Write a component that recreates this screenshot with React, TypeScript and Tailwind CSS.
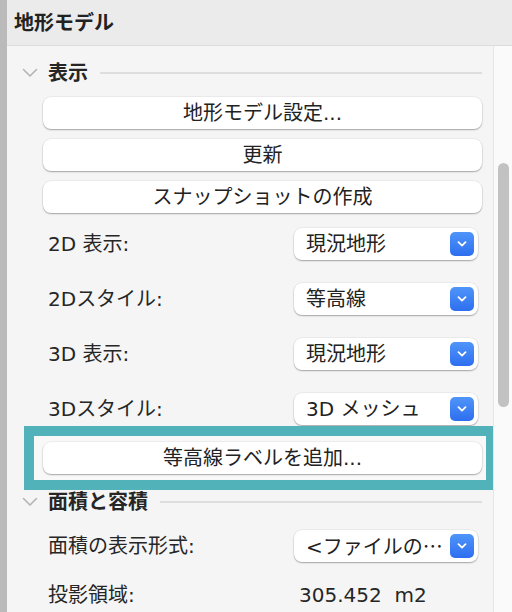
import React from "react";

const font = "font-['DejaVu_Sans','Noto_Sans_CJK_JP',sans-serif]";

function SectionChevron() {
  return (
    <svg width="16" height="10" viewBox="0 0 16 10" className="shrink-0">
      <polyline points="1.5,1.5 8,8 14.5,1.5" fill="none" stroke="#b4b4b4" strokeWidth="1.6" strokeLinecap="round" strokeLinejoin="round" />
    </svg>
  );
}

function SectionHeading({ title, className = "" }: { title: string; className?: string }) {
  return (
    <div className={`flex items-center pl-[15px] pr-[11px] ${className}`}>
      <SectionChevron />
      <span className="ml-[10px] text-[20px] font-bold text-[#262626] leading-[24px]">{title}</span>
      <div className="ml-[12px] flex-1 h-[2px] bg-[#dedede]" />
    </div>
  );
}

function PushButton({ label }: { label: string }) {
  return (
    <button className="w-full h-[32px] rounded-[8px] bg-white text-[20px] text-[#222] leading-[24px] shadow-[0_1px_1.5px_rgba(0,0,0,0.3),0_0_0_0.5px_rgba(0,0,0,0.08)]">
      {label}
    </button>
  );
}

function PopUp({ value }: { value: React.ReactNode }) {
  return (
    <div className="w-[184px] h-[32px] rounded-[8px] bg-white flex items-center pl-[12px] pr-[4px] shadow-[0_1px_1.5px_rgba(0,0,0,0.3),0_0_0_0.5px_rgba(0,0,0,0.08)]">
      <span className="flex-1 text-[20px] text-[#222] leading-[24px] whitespace-nowrap">{value}</span>
      <div className="w-[24px] h-[24px] shrink-0 rounded-[5px] bg-linear-to-b from-[#4f95f9] to-[#2e6eef] flex items-center justify-center">
        <svg width="10" height="6" viewBox="0 0 10 6">
          <polyline points="1.5,1.2 5,4.6 8.5,1.2" fill="none" stroke="white" strokeWidth="1.8" strokeLinecap="round" strokeLinejoin="round" />
        </svg>
      </div>
    </div>
  );
}

function Row({ label, children, className = "" }: { label: string; children: React.ReactNode; className?: string }) {
  return (
    <div className={`flex items-center justify-between pl-[41px] pr-[15px] ${className}`}>
      <span className="text-[20px] text-[#262626] leading-[24px]">{label}</span>
      {children}
    </div>
  );
}

export default function App() {
  const rows = [
    { label: "2D 表示:", value: "現況地形" },
    { label: "2Dスタイル:", value: "等高線" },
    { label: "3D 表示:", value: "現況地形" },
    { label: "3Dスタイル:", value: "3D メッシュ" },
  ];

  return (
    <div className={`w-[512px] h-[612px] flex overflow-hidden bg-[#f5f5f5] ${font}`}>
      {/* window edge */}
      <div className="w-[7px] shrink-0 bg-[#bababa]" />

      <div className="flex-1 flex flex-col min-w-0">
        {/* Title bar */}
        <div className="h-[46px] shrink-0 flex items-center pl-[7px] bg-[#ebebeb] border-b border-[#dcdcdc]">
          <span className="text-[20px] font-bold text-[#222] leading-[24px]">地形モデル</span>
        </div>

        <div className="flex-1 flex min-h-0">
          {/* Inspector content */}
          <div className="flex-1 flex flex-col">
            <SectionHeading title="表示" className="h-[28px] mt-[13px]" />

            <div className="flex flex-col gap-[10px] pl-[36px] pr-[11px] mt-[10px]">
              <PushButton label="地形モデル設定..." />
              <PushButton label="更新" />
              <PushButton label="スナップショットの作成" />
            </div>

            <div className="flex flex-col gap-[23px] mt-[15px]">
              {rows.map((r) => (
                <Row key={r.label} label={r.label}>
                  <PopUp value={r.value} />
                </Row>
              ))}
            </div>

            {/* highlighted button */}
            <div className="ml-[17px] mr-[-3px] mt-[1px] border-[10px] border-[#52b2b9] bg-[#f8f8f8] pt-[6px] pb-[6px] pl-[9px] pr-[4px]">
              <PushButton label="等高線ラベルを追加..." />
            </div>

            <SectionHeading title="面積と容積" className="h-[24px]" />

            <Row label="面積の表示形式:" className="mt-[16px]">
              <PopUp value={<>&lt;ファイルの<span className="font-['Noto_Sans_CJK_JP']">⋯</span></>} />
            </Row>

            <div className="flex items-center h-[32px] mt-[17px] pl-[41px]">
              <span className="w-[251px] text-[20px] text-[#262626] leading-[24px]">投影領域:</span>
              <span className="text-[20px] text-[#262626] leading-[24px] whitespace-pre">305.452  m2</span>
            </div>
          </div>

          {/* Scroll bar */}
          <div className="w-[19px] shrink-0 bg-[#fafafa] border-l border-[#e6e6e6] pl-[4px] pt-[117px]">
            <div className="w-[11px] h-[244px] rounded-full bg-[#c2c2c2]" />
          </div>
        </div>
      </div>
    </div>
  );
}
